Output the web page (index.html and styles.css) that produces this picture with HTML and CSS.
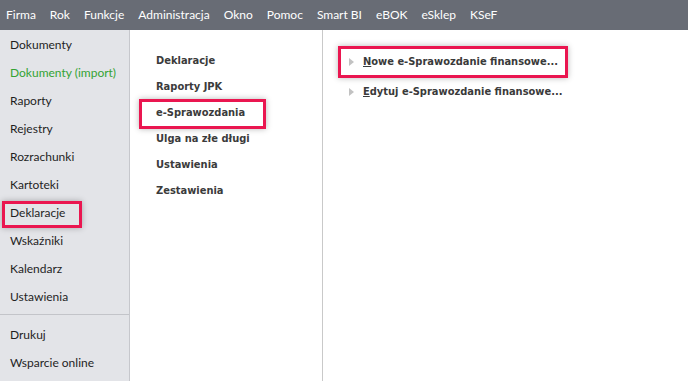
FILE: index.html
```html
<!DOCTYPE html>
<html lang="pl">
<head>
    <meta charset="UTF-8">
    <title>Deklaracje</title>
    <link rel="stylesheet" href="styles.css">
</head>
<body>
    <div class="menubar">
        <span>Firma</span>
        <span>Rok</span>
        <span>Funkcje</span>
        <span>Administracja</span>
        <span>Okno</span>
        <span>Pomoc</span>
        <span>Smart BI</span>
        <span>eBOK</span>
        <span>eSklep</span>
        <span>KSeF</span>
    </div>

    <div class="main">
        <div class="sidebar">
            <div class="nav">
                <div class="nav-item">Dokumenty</div>
                <div class="nav-item import">Dokumenty (import)</div>
                <div class="nav-item">Raporty</div>
                <div class="nav-item">Rejestry</div>
                <div class="nav-item">Rozrachunki</div>
                <div class="nav-item">Kartoteki</div>
                <div class="nav-item marked">Deklaracje</div>
                <div class="nav-item">Wskaźniki</div>
                <div class="nav-item">Kalendarz</div>
                <div class="nav-item">Ustawienia</div>
            </div>
            <div class="nav nav-bottom">
                <div class="nav-item">Drukuj</div>
                <div class="nav-item">Wsparcie online</div>
            </div>
        </div>

        <div class="groups">
            <div class="group">Deklaracje</div>
            <div class="group">Raporty JPK</div>
            <div class="group marked">e-Sprawozdania</div>
            <div class="group">Ulga na złe długi</div>
            <div class="group">Ustawienia</div>
            <div class="group">Zestawienia</div>
        </div>

        <div class="actions">
            <div class="action marked"><span class="key">N</span>owe e-Sprawozdanie finansowe...</div>
            <div class="action"><span class="key">E</span>dytuj e-Sprawozdanie finansowe...</div>
        </div>
    </div>
</body>
</html>
```

FILE: styles.css
```css
*, *::before, *::after {
    margin: 0;
    padding: 0;
    box-sizing: border-box;
}

body {
    width: 688px;
    height: 381px;
    overflow: hidden;
    background: #ffffff;
    font-family: Lato, 'Open Sans', sans-serif;
    font-size: 12px;
    color: #1f1f1f;
}

.menubar {
    height: 30px;
    background: #686c75;
    color: #ffffff;
    display: flex;
    align-items: center;
    gap: 14px;
    padding: 0 0 1px 6px;
    font-size: 12px;
}

.main {
    display: grid;
    grid-template-columns: 130px 193px 1fr;
    height: 351px;
}

/* left navigation */
.sidebar {
    background: #e3e4e8;
    border-right: 1px solid #c6c7cc;
    padding-top: 1px;
}

.nav-item {
    line-height: 28px;
    padding-left: 10px;
    position: relative;
}

.nav-item.import {
    color: #34a334;
}

.nav-bottom {
    margin-top: 3px;
    border-top: 1px solid #c3c4c9;
    padding-top: 6px;
}

/* middle column */
.groups {
    border-right: 1px solid #c9c9c9;
    padding: 18px 0 0 26px;
}

.group {
    font-family: 'DejaVu Sans Condensed', 'DejaVu Sans', sans-serif;
    font-weight: bold;
    font-size: 11px;
    line-height: 26px;
    color: #3b3b3b;
    position: relative;
}

/* right column */
.actions {
    padding: 17px 0 0 25px;
}

.action {
    font-family: 'DejaVu Sans Condensed', 'DejaVu Sans', sans-serif;
    font-weight: bold;
    font-size: 11px;
    line-height: 30px;
    color: #3a3a3a;
    padding-left: 15px;
    position: relative;
}

.action::before {
    content: '';
    position: absolute;
    left: 1px;
    top: 11px;
    border-left: 5px solid #c2c2c2;
    border-top: 4px solid transparent;
    border-bottom: 4px solid transparent;
}

.key {
    text-decoration: underline;
}

/* red annotation frames */
.marked::after {
    content: '';
    position: absolute;
    border: 3px solid #ea1650;
    box-shadow: 0 0 6px rgba(0, 0, 0, 0.28);
    pointer-events: none;
}

.nav-item.marked::after {
    left: 2px;
    top: 2px;
    width: 80px;
    height: 27px;
}

.group.marked::after {
    left: -17px;
    top: -1px;
    width: 127px;
    height: 30px;
}

.action.marked::after {
    left: -10px;
    top: -1px;
    width: 230px;
    height: 32px;
}
```
